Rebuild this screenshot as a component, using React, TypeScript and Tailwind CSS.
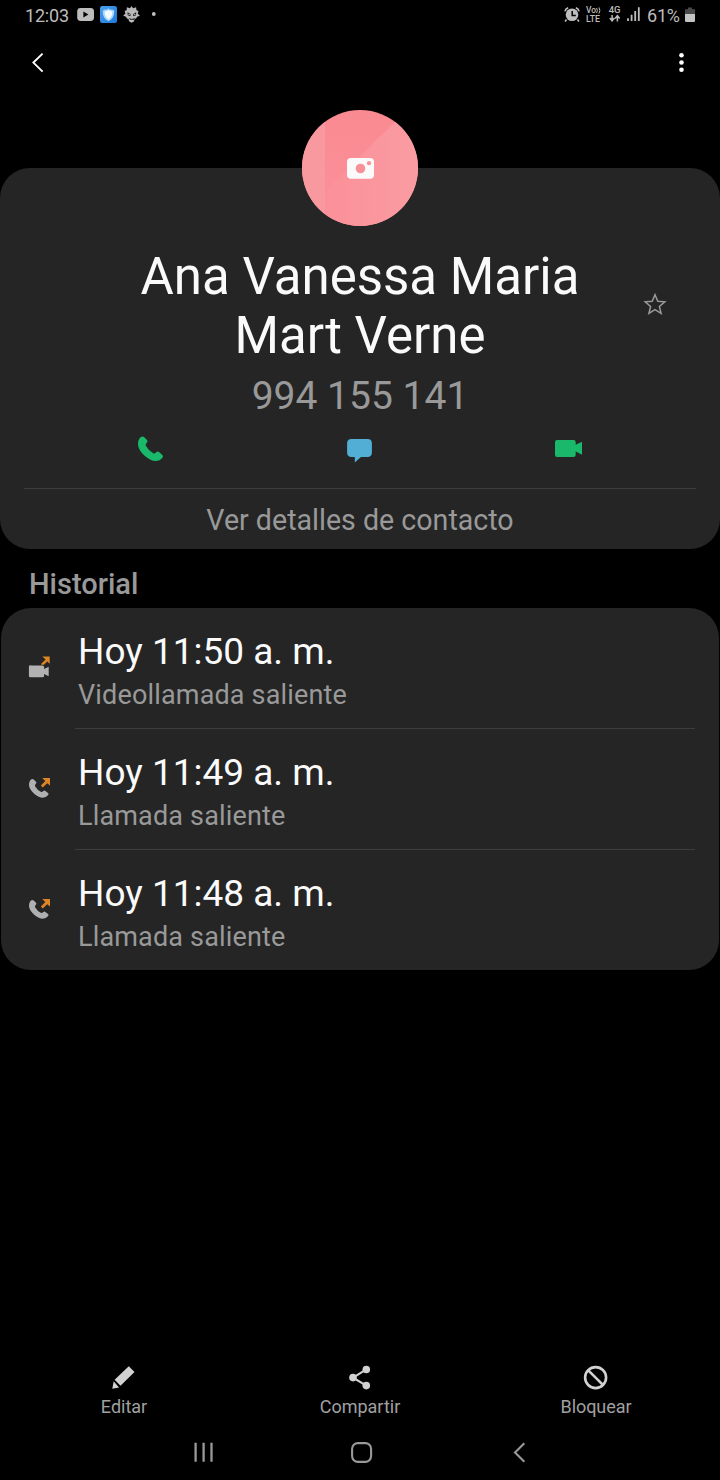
import React from "react";

function PhoneShape({ className }: { className: string }) {
  return (
    <path
      className={className}
      d="M1.6 2.2 Q4 -.6 6 1.1 L9 4.1 Q10.2 5.4 8.8 6.8 Q7 8.4 7.8 9.8 Q10.5 14.6 15.2 17.3 Q16.6 18 18 16.5 Q19.6 14.9 21 16.1 L24.4 18.9 Q25.6 20 24.6 21.5 Q22 25 17.4 25.1 Q13 25.1 6.6 19.8 Q0 13.6 0 8 Q0 4.3 1.6 2.2Z"
    />
  );
}

function StatusBar() {
  return (
    <div className="flex h-[30px] items-center justify-between pl-[25px] pr-[25px] text-[18px] leading-[30px] text-[#bcbcbc]">
      <div className="flex h-[30px] items-center">
        <span className="w-[52px] whitespace-nowrap pt-[2px] tracking-[-0.2px]">12:03</span>
        <svg className="h-[30px] w-[80px]" viewBox="77 0 80 30">
          <rect x="77.2" y="8" width="16.8" height="13" rx="3.4" fill="#bdbdbd" />
          <path d="M83.4 11.5v6l5-3z" fill="#000" />
          <defs>
            <linearGradient id="tile" x1="0" y1="0" x2="1" y2="1">
              <stop offset="0" stopColor="#49a2ec" />
              <stop offset="1" stopColor="#1f78dc" />
            </linearGradient>
          </defs>
          <rect x="100" y="6" width="17" height="17" rx="2.5" fill="url(#tile)" />
          <path d="M108.5 8.2l1.3 1.2 3.5.4.9 1.2c.2 5-1.6 8-5.7 10.2-4.1-2.2-5.9-5.2-5.7-10.2l.9-1.2 3.5-.4z" fill="#a9d6fa" />
          <path d="M108.5 10.3l3.8 1.2c.1 3.9-1.2 6.2-3.8 8-2.6-1.8-3.9-4.1-3.8-8z" fill="#f4fbff" />
          <path d="M131.5 6l1.6 2.2 3-1 .4 3 2 .8-.8 2.6 2.2 2.2-2.8 1-1 1.7-1.4.5-.8 2.6-2.3 1.2-2.4-1.2-.8-2.6-1.5-.5-.9-1.7-2.8-1 2.2-2.2-.8-2.6 2-.8.3-3 3.1 1z" fill="#b9b9b9" />
          <path d="M127.5 12.3l3 1.6v2.4l-2.8-1zM136.2 12.3l-3 1.6v2.4l2.8-1zM128.8 18l3 1 3.4-1-1.2 1.7h-3.8z" fill="#181818" />
          <path d="M128.4 14.4h1.4M134 14.4h1.4" stroke="#c4c4c4" strokeWidth="1" />
          <circle cx="153.8" cy="14" r="1.9" fill="#bdbdbd" />
        </svg>
      </div>
      <div className="flex h-[30px] items-center">
        <svg className="h-[30px] w-[83px]" viewBox="564 0 83 30">
          <circle cx="572" cy="14.8" r="6.3" fill="#bdbdbd" />
          <path d="M566.5 19.5l-1.4 2M577.5 19.5l1.4 2" stroke="#bdbdbd" strokeWidth="1.6" />
          <path d="M564.9 11.3q.5-2.6 3.3-3.6M579.1 11.3q-.5-2.6-3.3-3.6" stroke="#bdbdbd" strokeWidth="1.5" fill="none" />
          <path d="M572.2 11v4.4h3.6" stroke="#000" strokeWidth="1.5" fill="none" />
          <g fill="#bdbdbd" fontFamily="Roboto" fontWeight="500">
            <text x="586" y="13.3" fontSize="8.6" textLength="10" lengthAdjust="spacingAndGlyphs">Vo</text>
            <text x="586" y="21.7" fontSize="9" textLength="14" lengthAdjust="spacingAndGlyphs">LTE</text>
            <text x="608.7" y="13.3" fontSize="9" textLength="11.8" lengthAdjust="spacingAndGlyphs">4G</text>
          </g>
          <path d="M596.6 8q1.5 2.4 0 5M598.9 7.4q2 3.1 0 6.2" stroke="#bdbdbd" strokeWidth="1" fill="none" />
          <path d="M612.1 15v5M609.8 18l2.3 2.8 2.3-2.8M617.4 21.4v-5M615.1 18.6l2.3-2.8 2.3 2.8" stroke="#bdbdbd" strokeWidth="1.5" fill="none" />
          <path d="M628 18.3v2.7M631.6 14.8v6.2M635.2 11v10M638.8 7.3v13.7" stroke="#bdbdbd" strokeWidth="1.8" />
        </svg>
        <span className="w-[37px] whitespace-nowrap pt-[2px] tracking-[-0.2px]">61%</span>
        <svg className="h-[30px] w-[11px]" viewBox="684 0 11 30">
          <path d="M688 7.5h4v1.8h3v5h-10v-5h3z" fill="#484848" />
          <path d="M685 14h10v6.8q0 1.2-1.2 1.2h-7.6q-1.2 0-1.2-1.2z" fill="#c4c4c4" />
        </svg>
      </div>
    </div>
  );
}

function Header() {
  return (
    <header className="flex h-[80px] justify-between px-[28px]">
      <svg className="mt-[20px] h-[26px] w-[20px]" viewBox="28 50 20 26">
        <path d="M42.6 53.6l-9.2 9 9.2 9" stroke="#fff" strokeWidth="1.9" fill="none" />
      </svg>
      <svg className="mt-[20px] h-[26px] w-[20px]" viewBox="672 50 20 26">
        <circle cx="681.5" cy="55.2" r="2.3" fill="#fff" />
        <circle cx="681.5" cy="62.5" r="2.3" fill="#fff" />
        <circle cx="681.5" cy="69.8" r="2.3" fill="#fff" />
      </svg>
    </header>
  );
}

function Avatar() {
  return (
    <svg className="-mt-[58px] h-[116px] w-[116px] shrink-0" viewBox="302 110 116 116">
      <defs>
        <clipPath id="disc"><circle cx="360" cy="168" r="58" /></clipPath>
        <linearGradient id="rose" x1="0" y1="0" x2="0" y2="1">
          <stop offset="0" stopColor="#fa8a92" />
          <stop offset="1" stopColor="#fb9099" />
        </linearGradient>
        <linearGradient id="sheen" x1="0" y1="0" x2="1" y2="0">
          <stop offset="0" stopColor="#fb9099" />
          <stop offset="1" stopColor="#fa9ca2" />
        </linearGradient>
      </defs>
      <g clipPath="url(#disc)">
        <rect x="302" y="110" width="116" height="116" fill="url(#rose)" />
        <path d="M325 191L406 111h12v115h-93z" fill="url(#sheen)" />
        <rect x="302" y="110" width="23" height="116" fill="#f8989f" />
      </g>
      <rect x="347" y="158" width="27" height="20.7" rx="4" fill="#fafafa" />
      <circle cx="360.5" cy="168.5" r="4.8" fill="#f98f97" />
      <circle cx="369" cy="163.2" r="2.1" fill="#f98f97" />
    </svg>
  );
}

function ContactCard() {
  return (
    <section className="mt-[58px] flex h-[381px] flex-col items-center rounded-[30px] bg-[#252525]">
      <Avatar />
      <div className="mt-[21px] flex h-[118px] w-full items-center justify-between">
        <div className="w-[80px]" />
        <h1 className="whitespace-nowrap text-center text-[51px] leading-[59px] text-[#fafafa]">
          Ana Vanessa Maria
          <br />
          Mart Verne
        </h1>
        <svg className="mr-[50px] h-[30px] w-[30px]" viewBox="640 291 30 30">
          <path
            d="M655 294.7l2.8 6.5 7 .6-5.4 4.6 1.7 7-6.1-3.7-6.1 3.7 1.7-7-5.4-4.6 7-.6z"
            stroke="#999"
            strokeWidth="1.5"
            fill="none"
          />
        </svg>
      </div>
      <div className="h-[60px] whitespace-nowrap text-[39px] leading-[62px] text-[#999]">994 155 141</div>
      <div className="flex h-[63px] w-full justify-between px-[135px]">
        <svg className="mt-[6px] h-[32px] w-[32px]" viewBox="-3 -5 32 32">
          <PhoneShape className="fill-[#19b86b]" />
        </svg>
        <svg className="mt-[6px] h-[32px] w-[32px]" viewBox="344 431 32 32">
          <path d="M351.5 439h16q4.4 0 4.4 4.4v9.2q0 4.4-4.4 4.4h-6.5l-6.2 5.6v-5.6h-3.3q-4.4 0-4.4-4.4v-9.2q0-4.4 4.4-4.4z" fill="#52aed5" />
        </svg>
        <svg className="mt-[6px] h-[32px] w-[32px]" viewBox="553 431 32 32">
          <path d="M557 440h16.5q2.2 0 2.2 2.2v2.6l6.3-3v13l-6.3-3.2v3.2q0 2.2-2.2 2.2H557q-2 0-2-2.2v-12.6q0-2.2 2-2.2z" fill="#19b86b" />
        </svg>
      </div>
      <div className="h-px w-[672px] shrink-0 bg-[#3d3d3d]" />
      <div className="h-[60px] whitespace-nowrap text-[28.6px] leading-[63px] text-[#999]">Ver detalles de contacto</div>
    </section>
  );
}

const calls = [
  { time: "Hoy 11:50 a. m.", kind: "Videollamada saliente", video: true },
  { time: "Hoy 11:49 a. m.", kind: "Llamada saliente", video: false },
  { time: "Hoy 11:48 a. m.", kind: "Llamada saliente", video: false },
];

function CallIcon({ video }: { video: boolean }) {
  return (
    <svg className="mt-[46px] h-[28px] w-[28px]" viewBox="26 654 28 28">
      {video ? (
        <path d="M30.5 665.5h12q1.6 0 1.6 1.6v1.8l4.6-2.2v9.6l-4.6-2.2v1.6q0 1.6-1.6 1.6h-12q-1.6 0-1.6-1.6v-9q0-1.6 1.6-1.6z" fill="#b2b2b2" />
      ) : (
        <g transform="translate(29 657.7) scale(.78 .76)">
          <PhoneShape className="fill-[#aeb0b2]" />
        </g>
      )}
      <path d={video ? "M42.4 656.5h7.3v7.3l-2.4-2.4-3.4 3.4h-2.7v-1l4.4-4.4-3.2-2.9z" : "M42.2 657h7.8v7.6l-2.8-2.3-4.5 4.1-1.8-1.9 4.4-4.5z"} fill="#dd8425" />
    </svg>
  );
}

function History() {
  return (
    <>
      <h2 className="h-[59px] pl-[29px] text-[29px] font-medium leading-[71px] text-[#999]">Historial</h2>
      <section className="mx-px h-[362px] rounded-[30px] bg-[#252525]">
        {calls.map((call, i) => (
          <div key={call.time} className="flex h-[121px] pl-[25px] pr-[24px]">
            <CallIcon video={call.video} />
            <div className={`ml-[21px] flex-1 border-b pl-[3px] ${i < 2 ? "border-[#3d3d3d]" : "border-transparent"}`}>
              <div className="h-[64px] whitespace-nowrap text-[37px] leading-[88px] text-[#fafafa]">{call.time}</div>
              <div className="whitespace-nowrap text-[27px] leading-[46px] tracking-[0.16px] text-[#999]">{call.kind}</div>
            </div>
          </div>
        ))}
      </section>
    </>
  );
}

function Actions() {
  return (
    <div className="flex h-[70px] justify-between px-[64px] text-[18px] leading-[26px] text-[#a0a0a0]">
      <button className="flex w-[120px] flex-col items-center">
        <svg className="h-[34px] w-[30px]" viewBox="109 1360 30 34">
          <path d="M128.8 1366.3l5.7 5.7-14 13.8-5.9-6zM113.7 1381.3l5.3 6.1-6.7 1.3z" fill="#d2d2d2" />
        </svg>
        <span>Editar</span>
      </button>
      <button className="flex w-[120px] flex-col items-center">
        <svg className="h-[34px] w-[30px]" viewBox="345 1360 30 34">
          <path d="M366.3 1369.4l-13.2 8.3 13.2 7.9" stroke="#d2d2d2" strokeWidth="2.1" fill="none" />
          <circle cx="366.3" cy="1369.5" r="3.8" fill="#d2d2d2" />
          <circle cx="353" cy="1377.6" r="3.8" fill="#d2d2d2" />
          <circle cx="366.3" cy="1385.6" r="3.8" fill="#d2d2d2" />
        </svg>
        <span>Compartir</span>
      </button>
      <button className="flex w-[120px] flex-col items-center">
        <svg className="h-[34px] w-[30px]" viewBox="581 1360 30 34">
          <circle cx="595.6" cy="1377.6" r="10.5" stroke="#d2d2d2" strokeWidth="2.6" fill="none" />
          <path d="M588.3 1370.3l14.6 14.6" stroke="#d2d2d2" strokeWidth="2.6" />
        </svg>
        <span className="tracking-[-0.05px]">Bloquear</span>
      </button>
    </div>
  );
}

function NavBar() {
  return (
    <nav className="flex h-[50px] items-center justify-between pl-[188px] pr-[186px]">
      <svg className="h-[30px] w-[30px]" viewBox="188 1440 30 30">
        <path d="M195.6 1442.8v19M203.6 1442.8v19M211.5 1442.8v19" stroke="#999" strokeWidth="2.3" />
      </svg>
      <svg className="h-[30px] w-[30px]" viewBox="346 1440 30 30">
        <rect x="352.1" y="1443.1" width="19" height="18.8" rx="5.8" stroke="#999" strokeWidth="2.1" fill="none" />
      </svg>
      <svg className="h-[30px] w-[30px]" viewBox="504 1440 30 30">
        <path d="M524.3 1443.2l-9.3 9.3 9.3 9.3" stroke="#999" strokeWidth="2.1" fill="none" />
      </svg>
    </nav>
  );
}

export default function App() {
  return (
    <main className="flex h-[1480px] w-[720px] flex-col overflow-hidden bg-black font-[Roboto,sans-serif]">
      <StatusBar />
      <Header />
      <ContactCard />
      <History />
      <div className="flex-1" />
      <Actions />
      <NavBar />
    </main>
  );
}
